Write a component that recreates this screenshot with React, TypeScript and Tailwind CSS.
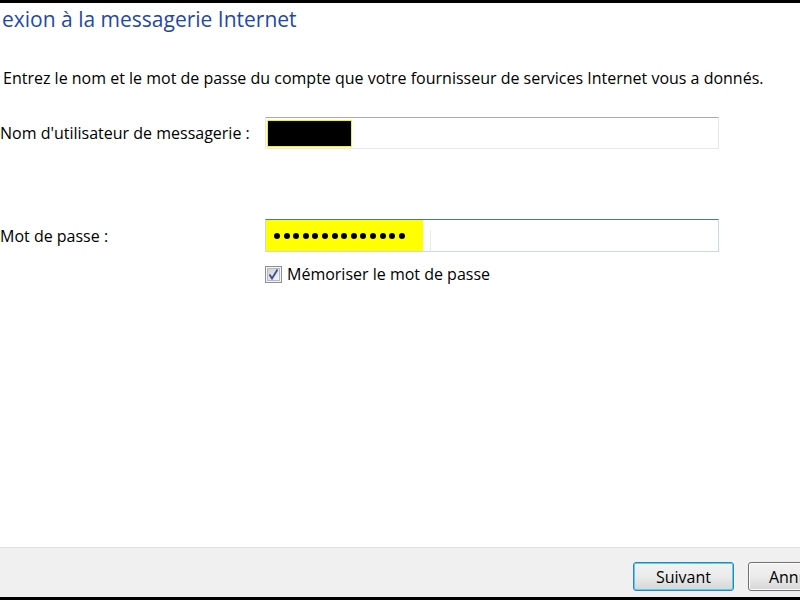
import React from 'react';

const font = { fontFamily: '"Open Sans", "Noto Sans", sans-serif' };

const Checkbox: React.FC = () => (
  <svg width="17" height="17" viewBox="0 0 17 17" className="shrink-0">
    <defs>
      <linearGradient id="cb" x1="0" y1="0" x2="1" y2="1">
        <stop offset="0" stopColor="#cbcfd5" />
        <stop offset="1" stopColor="#f6f6f6" />
      </linearGradient>
    </defs>
    <rect x="0.5" y="0.5" width="16" height="16" fill="#f4f4f4" stroke="#8e8f8f" />
    <rect x="2.5" y="2.5" width="12" height="12" fill="url(#cb)" stroke="#b6bbc3" />
    <path d="M4.5 8.5 L7 12.5 L12.5 3.5" fill="none" stroke="#3b4f8c" strokeWidth="1.8" />
  </svg>
);

const App: React.FC = () => {
  return (
    <div
      className="w-[800px] h-[600px] flex flex-col bg-white border-t-[3px] border-b-[3px] border-black overflow-hidden text-black"
      style={font}
    >
      <main className="flex-1 flex flex-col">
        <h1 className="mt-[2px] pl-[2px] text-[21px] leading-[28px] text-[#1f48a8] whitespace-nowrap">
          exion à la messagerie Internet
        </h1>

        <p className="mt-[33px] pl-[3px] text-[16px] leading-[24px] whitespace-nowrap">
          Entrez le nom et le mot de passe du compte que votre fournisseur de services Internet vous a donnés.
        </p>

        <div className="mt-[27px] grid grid-cols-[265px_454px] items-center">
          <label className="text-[16px] whitespace-nowrap">Nom d'utilisateur de messagerie :</label>
          <div className="h-[32px] border border-[#e3e9ef] border-t-[#abadb3] bg-white flex items-center px-[1px]">
            <div className="w-[85px] h-[27px] bg-black border border-[#f5f500]" />
          </div>

          <div className="col-span-2 h-[70px]" />

          <label className="text-[16px] whitespace-nowrap">Mot de passe :</label>
          <div className="relative h-[33px] border border-[#c5daed] border-t-[#3d7bad] bg-white flex items-stretch">
            <div className="w-[157px] bg-[#ffff00] flex items-center pl-[8px] gap-[3.6px]">
              {Array.from({ length: 14 }).map((_, i) => (
                <span key={i} className="w-[6px] h-[6px] rounded-full bg-black" />
              ))}
            </div>
            <span className="absolute left-[164px] top-[10px] w-[1px] h-[22px] bg-[#e8e8e8]" />
          </div>

          <div />
          <div className="mt-[10px] flex items-center gap-[5px]">
            <Checkbox />
            <span className="text-[16px] whitespace-nowrap">Mémoriser le mot de passe</span>
          </div>
        </div>
      </main>

      <footer className="h-[50px] bg-[#f0f0f0] border-t border-[#dfdfdf] flex items-start pt-[14px] pl-[633px] gap-[14px]">
        <button className="w-[101px] h-[29px] shrink-0 rounded-[3px] border border-[#3c7fb1] shadow-[inset_0_0_0_1px_#48d4ff] bg-gradient-to-b from-[#f2f2f2] via-[#ebebeb] to-[#d6d6d6] text-[16px] text-black leading-none">
          Suivant
        </button>
        <button className="w-[101px] h-[29px] shrink-0 rounded-[3px] border border-[#707070] shadow-[inset_0_0_0_1px_#fcfcfc] bg-gradient-to-b from-[#f2f2f2] via-[#ebebeb] to-[#d6d6d6] text-[16px] text-black leading-none">
          Annuler
        </button>
      </footer>
    </div>
  );
};

export default App;
